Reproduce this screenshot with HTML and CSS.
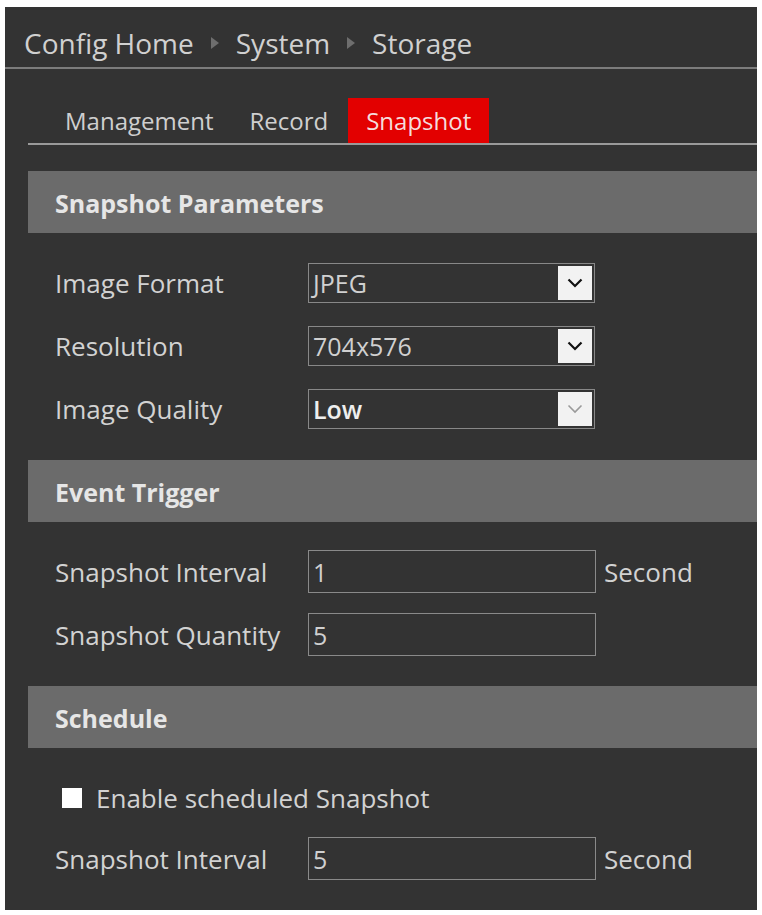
FILE: index.html
```html
<!DOCTYPE html>
<html lang="en">
<head>
	<meta charset="UTF-8">
	<title>Storage - Snapshot</title>
	<link rel="stylesheet" href="styles.css">
</head>
<body>
	<div class="panel">
		<div class="crumb">
			<span>Config Home</span>
			<i class="sep"></i>
			<span>System</span>
			<i class="sep"></i>
			<span>Storage</span>
		</div>

		<ul class="tabs">
			<li>Management</li>
			<li>Record</li>
			<li class="on">Snapshot</li>
		</ul>

		<!-- snapshot parameters -->
		<div class="box">
			<h3>Snapshot Parameters</h3>
			<div class="box-body">
				<div class="row">
					<label>Image Format</label>
					<div class="select">
						<span>JPEG</span>
						<b class="arrow"><svg width="16" height="10" viewBox="0 0 16 10"><path d="M1.5 1.5 L8 8 L14.5 1.5" fill="none" stroke="#111" stroke-width="2.2"/></svg></b>
					</div>
				</div>
				<div class="row">
					<label>Resolution</label>
					<div class="select">
						<span>704x576</span>
						<b class="arrow"><svg width="16" height="10" viewBox="0 0 16 10"><path d="M1.5 1.5 L8 8 L14.5 1.5" fill="none" stroke="#111" stroke-width="2.2"/></svg></b>
					</div>
				</div>
				<div class="row">
					<label>Image Quality</label>
					<div class="select">
						<span class="strong">Low</span>
						<b class="arrow"><svg width="16" height="10" viewBox="0 0 16 10"><path d="M1.5 1.5 L8 8 L14.5 1.5" fill="none" stroke="#9a9a9a" stroke-width="1.6"/></svg></b>
					</div>
				</div>
			</div>
		</div>

		<!-- event trigger -->
		<div class="box">
			<h3>Event Trigger</h3>
			<div class="box-body">
				<div class="row">
					<label>Snapshot Interval</label>
					<input type="text" class="txt" value="1">
					<em class="unit">Second</em>
				</div>
				<div class="row">
					<label>Snapshot Quantity</label>
					<input type="text" class="txt" value="5">
				</div>
			</div>
		</div>

		<!-- schedule -->
		<div class="box">
			<h3>Schedule</h3>
			<div class="box-body">
				<div class="row check-row">
					<i class="check"></i>
					<span>Enable scheduled Snapshot</span>
				</div>
				<div class="row">
					<label>Snapshot Interval</label>
					<input type="text" class="txt" value="5">
					<em class="unit">Second</em>
				</div>
			</div>
		</div>
	</div>
</body>
</html>
```

FILE: styles.css
```css
* {
	margin: 0;
	padding: 0;
	box-sizing: border-box;
}
body {
	background: #fff;
	font-family: "Open Sans", "Liberation Sans", sans-serif;
	color: #d2d2d2;
}
.panel {
	margin: 7px 5px 0 5px;
	height: 903px;
	background: #333;
	overflow: hidden;
}
.crumb {
	height: 62px;
	padding: 12px 0 0 19px;
	display: flex;
	align-items: center;
	gap: 17px;
	font-size: 28px;
	color: #d0d0d0;
	border-bottom: 2px solid #7c7c7c;
}
.crumb .sep {
	width: 0;
	height: 0;
	border-top: 6px solid transparent;
	border-bottom: 6px solid transparent;
	border-left: 8px solid #6e6e6e;
}
.tabs {
	list-style: none;
	display: flex;
	margin: 29px 0 0 23px;
	padding-left: 19px;
	border-bottom: 2px solid #9a9a9a;
}
.tabs li {
	height: 45px;
	line-height: 46px;
	padding: 0 18px;
	font-size: 24px;
	color: #cfcfcf;
}
.tabs li.on {
	background: #e30000;
	color: #f5dcdc;
	margin-left: 2px;
}
.box {
	margin-top: 26px;
}
.box + .box {
	margin-top: 0;
}
.box h3 {
	margin-left: 23px;
	height: 62px;
	line-height: 64px;
	padding-left: 27px;
	background: #6b6b6b;
	font-size: 25px;
	font-weight: 700;
	color: #e6e6e6;
}
.box-body {
	padding: 29px 0 9px 50px;
}
.row {
	display: flex;
	align-items: center;
	height: 41px;
	margin-bottom: 22px;
	font-size: 26px;
}
.row label {
	width: 253px;
	color: #d2d2d2;
}
.select {
	width: 287px;
	height: 40px;
	border: 1px solid #888;
	display: flex;
	align-items: center;
	justify-content: space-between;
	padding: 2px 2px 2px 4px;
	font-size: 25px;
	color: #d0d0d0;
}
.select .strong {
	font-weight: 600;
	color: #eee;
}
.select .arrow {
	width: 34px;
	height: 34px;
	background: #f2f2f2;
	display: flex;
	align-items: center;
	justify-content: center;
}
.txt {
	width: 288px;
	height: 43px;
	background: transparent;
	border: 1px solid #8a8a8a;
	padding-left: 4px;
	font-family: inherit;
	font-size: 25px;
	color: #d0d0d0;
	outline: none;
}
.unit {
	font-style: normal;
	margin-left: 8px;
	color: #d2d2d2;
}
.check-row {
	padding-left: 7px;
	margin-bottom: 20px;
}
.check {
	width: 20px;
	height: 20px;
	background: #fff;
	margin-right: 14px;
}
```
